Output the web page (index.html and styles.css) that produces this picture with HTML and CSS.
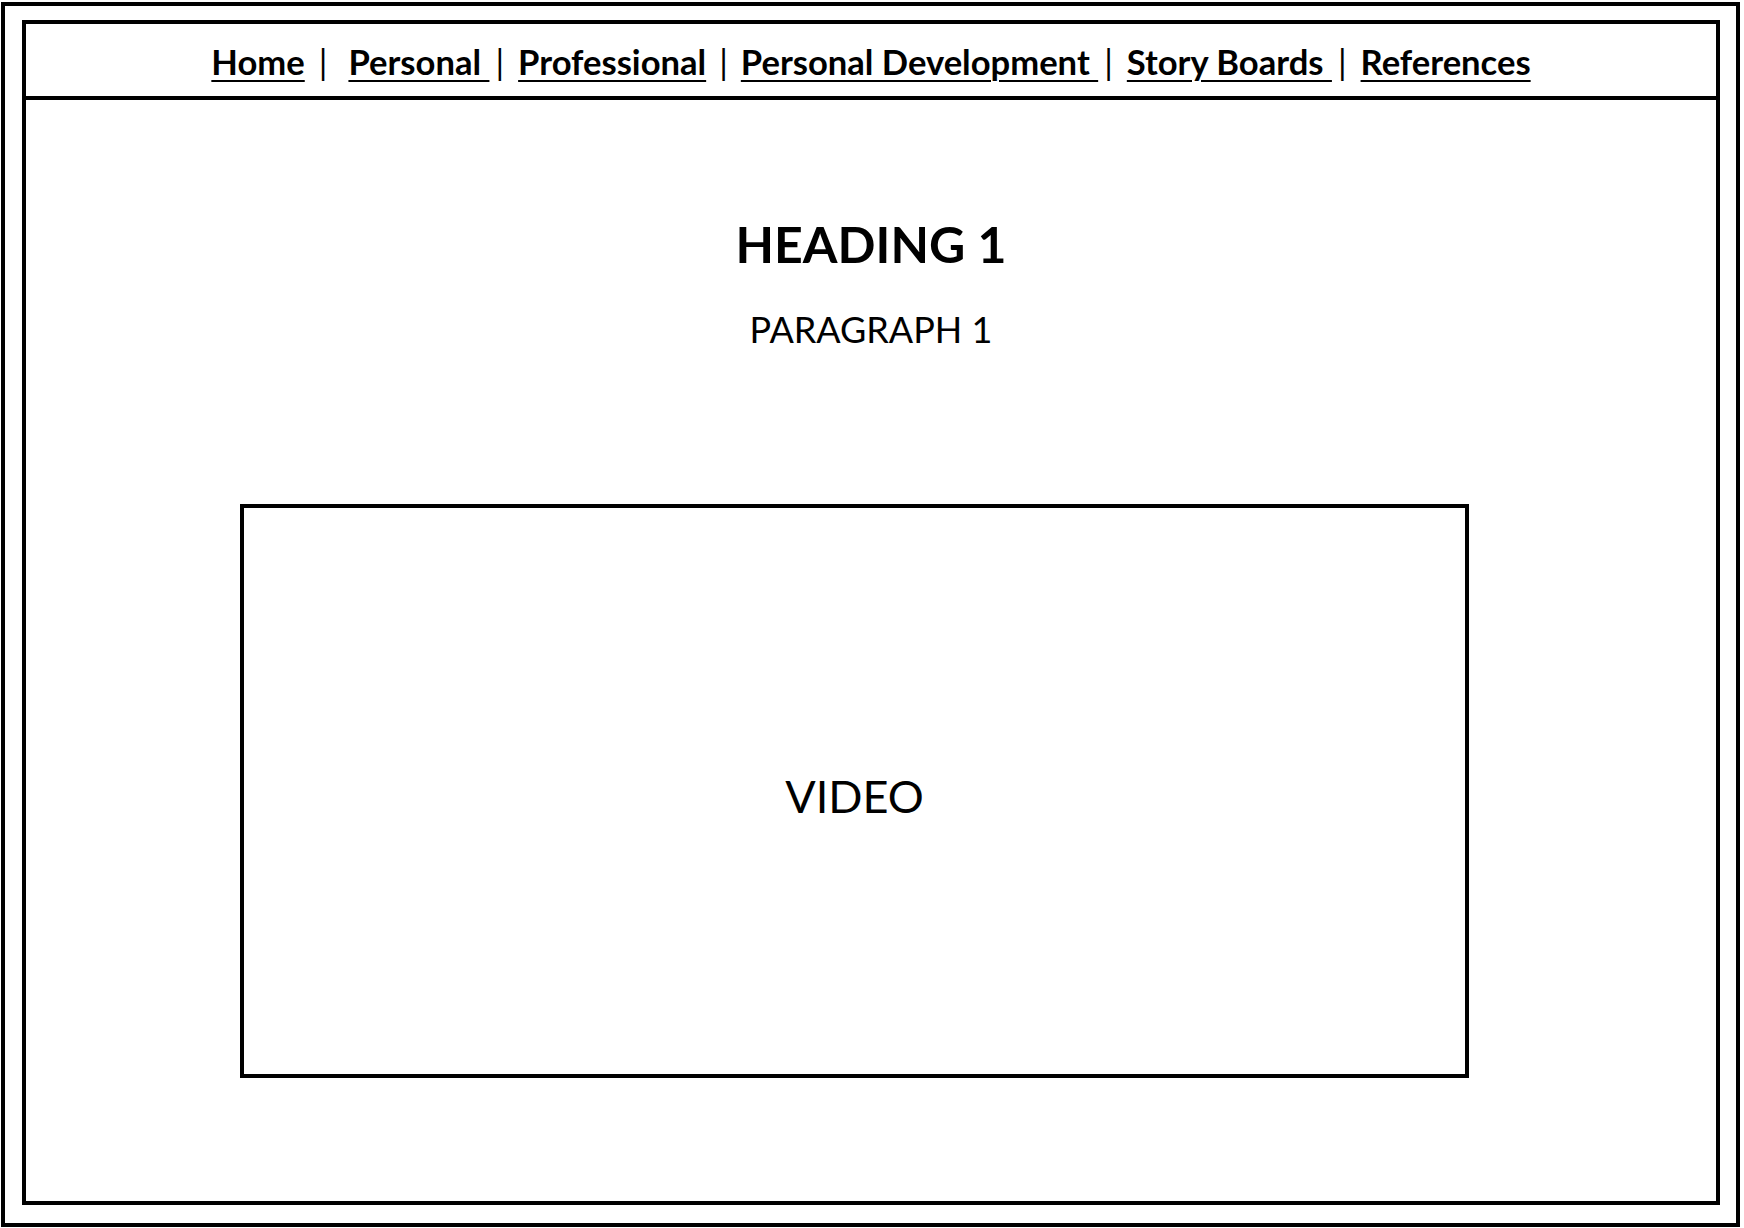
FILE: index.html
```html
<!DOCTYPE html>
<html lang="en">
<head>
<meta charset="utf-8">
<title>Home</title>
<link rel="stylesheet" href="styles.css">
</head>
<body>
<div class="page">
  <div class="frame">
    <nav class="nav">
      <a class="link" href="#">Home</a>
      <span class="sep sep-wide">|</span>
      <a class="link" href="#">Personal&nbsp;</a>
      <span class="sep sep-tight">|</span>
      <a class="link" href="#">Professional</a>
      <span class="sep">|</span>
      <a class="link" href="#">Personal Development&nbsp;</a>
      <span class="sep sep-tight">|</span>
      <a class="link" href="#">Story Boards&nbsp;</a>
      <span class="sep sep-tight">|</span>
      <a class="link" href="#">References</a>
    </nav>
    <main class="main">
      <h1 class="heading">HEADING 1</h1>
      <p class="para">PARAGRAPH 1</p>
      <div class="video">VIDEO</div>
    </main>
  </div>
</div>
</body>
</html>
```

FILE: styles.css
```css
html, body {
  margin: 0;
  padding: 0;
  background: #ffffff;
}

body {
  font-family: Lato, "Open Sans", "Liberation Sans", sans-serif;
  color: #000000;
}

.page {
  box-sizing: border-box;
  height: 1225px;
  margin: 2px 4px 1px 1px;
  border: 4px solid #000000;
  display: flex;
  flex-direction: column;
}

.frame {
  flex: 1;
  margin: 14px 16px 18px 17px;
  border: 4px solid #000000;
  display: flex;
  flex-direction: column;
}

.nav {
  box-sizing: border-box;
  height: 76px;
  padding-top: 3px;
  border-bottom: 4px solid #000000;
  display: flex;
  justify-content: center;
  align-items: center;
  font-size: 34.6px;
  line-height: 1.2;
  white-space: nowrap;
}

.link {
  color: #000000;
  font-weight: 700;
  text-decoration: underline;
  text-decoration-thickness: 2px;
  text-underline-offset: 5px;
}

.sep {
  font-weight: 400;
  margin: 0 13px;
}

.sep-wide {
  margin: 0 21px 0 14px;
}

.sep-tight {
  margin: 0 14px 0 6px;
}

.main {
  flex: 1;
  display: flex;
  flex-direction: column;
  padding-top: 114px;
}

.heading {
  margin: 0;
  text-align: center;
  font-size: 50px;
  font-weight: 700;
  line-height: 1.2;
}

.para {
  margin: 34px 0 0 0;
  text-align: center;
  font-size: 36px;
  font-weight: 400;
  line-height: 1.2;
}

.video {
  box-sizing: border-box;
  margin: 153px 0 0 214px;
  width: 1229px;
  height: 574px;
  border: 4px solid #000000;
  display: flex;
  justify-content: center;
  align-items: center;
  padding-top: 10px;
  font-size: 45px;
  line-height: 1.2;
}
```
